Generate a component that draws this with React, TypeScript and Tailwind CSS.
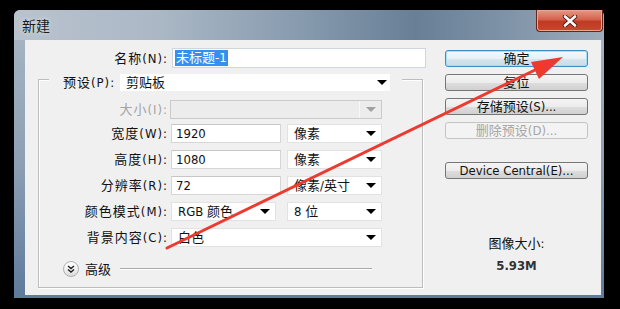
import React from "react";

const Tri = ({ disabled }: { disabled?: boolean }) => (
  <svg width="10" height="5" viewBox="0 0 10 5" className="shrink-0">
    <path d="M0 0H10L5 5Z" fill={disabled ? "#a0a0a0" : "#000"} />
  </svg>
);

const Sel = ({ text, className }: { text: string; className: string }) => (
  <div
    className={
      "flex h-[19px] items-center justify-between border border-[#e2e2e2] bg-white pl-[6px] pr-[5px] " +
      className
    }
  >
    <span>{text}</span>
    <Tri />
  </div>
);

const Inp = ({ text }: { text: string }) => (
  <div className="flex h-[19px] w-[110px] items-center border border-[#d6d6d6] border-t-[#c6c6c6] bg-white pl-[4px]">
    {text}
  </div>
);

const Row = ({
  label,
  children,
  className,
  disabled,
}: {
  label: string;
  children: React.ReactNode;
  className: string;
  disabled?: boolean;
}) => (
  <div className={"flex h-[19px] items-center " + className}>
    <div className={"w-[129px] text-right tracking-[1px] " + (disabled ? "text-[#a3a3a3]" : "text-[#111]")}>{label}</div>
    <div className="ml-[3px] flex items-center">{children}</div>
  </div>
);

const Btn = ({
  text,
  className,
  primary,
  disabled,
}: {
  text: string;
  className: string;
  primary?: boolean;
  disabled?: boolean;
}) => (
  <div
    className={
      "flex h-[17px] items-center justify-center rounded-[3px] border " +
      (primary
        ? "border-[#3c8fc4] bg-[linear-gradient(180deg,#f4f9fc_0%,#e8f1f7_50%,#d7e6ef_51%,#c9dbe6_100%)] shadow-[inset_0_0_0_1px_#a6e0f5] text-[#111] "
        : disabled
        ? "border-[#c4c4c4] bg-[#f3f3f3] text-[#a6a6a6] "
        : "border-[#767676] bg-[linear-gradient(180deg,#f4f4f4_0%,#ececec_50%,#dedede_51%,#d0d0d0_100%)] text-[#111] ") +
      className
    }
  >
    {text}
  </div>
);

export default function App() {
  return (
    <div className="relative h-[309px] w-[620px] overflow-hidden bg-black pl-[14px] pt-[10px] font-['DejaVu_Sans_Condensed','DejaVu_Sans','Noto_Sans_CJK_SC',sans-serif] text-[13px] leading-[19px] text-[#111]">
      <div className="flex h-[288px] w-[590px] flex-col rounded-t-[6px] bg-[linear-gradient(180deg,#aab7c6_0%,#8fa1b5_50%,#5f7b9b_100%)]">
        {/* title bar */}
        <div className="flex h-[30px] items-start justify-between rounded-t-[6px] bg-[linear-gradient(90deg,#b9c3ce_0%,#aab7c5_25%,#8599ad_50%,#687f96_68%,#7c91a6_82%,#9eacbb_100%)]">
          <div className="pl-[8px] pt-[6px] font-['Noto_Sans_CJK_SC',sans-serif] text-[14px] leading-[18px] text-[#1a1a1a] [text-shadow:0_0_4px_#e8eef4]">
            新建
          </div>
          <div className="mr-[1px] flex h-[22px] w-[67px] items-center justify-center rounded-b-[4px] border border-t-0 border-[#6a2418] bg-[linear-gradient(180deg,#e49a88_0%,#d4624c_45%,#c13a22_55%,#c4492e_100%)] shadow-[inset_0_0_0_1px_#eaa595]">
            <svg width="16" height="12" viewBox="0 0 16 12">
              <path d="M3 1.5L13 10.5M13 1.5L3 10.5" stroke="#5a1a10" strokeWidth="4.4" strokeLinecap="round" />
              <path d="M3 1.5L13 10.5M13 1.5L3 10.5" stroke="#ffffff" strokeWidth="2.6" strokeLinecap="round" />
            </svg>
          </div>
        </div>

        {/* content */}
        <div className="mb-[3px] ml-[11px] mr-[3px] flex flex-1 bg-[#f0f0f0]">
          {/* left column */}
          <div className="flex w-[401px] flex-col">
            <div className="mt-[8px] flex h-[20px] items-center">
              <div className="w-[143px] text-right tracking-[1px]">名称(N):</div>
              <div className="ml-[4px] flex h-[20px] w-[254px] items-center border border-[#cfd6de] bg-white pl-[2px]">
                <span className="bg-[#3390f0] px-[1px] leading-[16px] text-white">未标题-1</span>
              </div>
            </div>

            <div className="ml-[13px] mt-[11px] h-[209px] w-[385px] border border-[#bdbdbd] shadow-[inset_1px_1px_0_#ffffff,1px_1px_0_#ffffff]">
              <div className="-mt-[7px] ml-[10px] flex w-fit items-center bg-[#f0f0f0] pl-[14px] pr-[12px]">
                <div className="w-[54px] tracking-[1px]">预设(P):</div>
                <div className="ml-[3px] flex h-[17px] w-[270px] items-center justify-between bg-white pl-[6px] pr-[3px]">
                  <span>剪贴板</span>
                  <Tri />
                </div>
              </div>

              <Row label="大小(I):" className="mt-[8px]" disabled>
                <div className="-ml-[1px] flex h-[19px] w-[212px] items-center justify-end border border-[#cacaca] bg-[#ececec]">
                  <div className="flex h-full w-[22px] items-center justify-center border-l border-[#f8f8f8]">
                    <Tri disabled />
                  </div>
                </div>
              </Row>
              <Row label="宽度(W):" className="mt-[5px]">
                <Inp text="1920" />
                <Sel text="像素" className="ml-[6px] w-[95px]" />
              </Row>
              <Row label="高度(H):" className="mt-[7px]">
                <Inp text="1080" />
                <Sel text="像素" className="ml-[6px] w-[95px]" />
              </Row>
              <Row label="分辨率(R):" className="mt-[7px]">
                <Inp text="72" />
                <Sel text="像素/英寸" className="ml-[6px] w-[95px]" />
              </Row>
              <Row label="颜色模式(M):" className="mt-[7px]">
                <Sel text="RGB 颜色" className="w-[105px]" />
                <Sel text="8 位" className="ml-[11px] w-[95px]" />
              </Row>
              <Row label="背景内容(C):" className="mt-[7px]">
                <Sel text="白色" className="w-[211px]" />
              </Row>

              <div className="mt-[14px] flex h-[16px] items-center">
                <div className="ml-[24px] flex h-[16px] w-[16px] items-center justify-center rounded-full border border-[#b0b0b0] bg-[linear-gradient(180deg,#ffffff_0%,#f2f2f2_50%,#d9d9d9_100%)]">
                  <svg width="8" height="8" viewBox="0 0 8 8">
                    <path d="M1 1L4 3.5L7 1M1 4.5L4 7L7 4.5" stroke="#222" strokeWidth="1.4" fill="none" />
                  </svg>
                </div>
                <div className="ml-[6px]">高级</div>
                <div className="ml-[9px] h-[2px] w-[252px] border-t border-b border-t-[#a9a9a9] border-b-white" />
              </div>
            </div>
          </div>

          {/* right column */}
          <div className="ml-[19px] flex w-[143px] flex-col">
            <Btn text="确定" className="mt-[10px]" primary />
            <Btn text="复位" className="mt-[7px]" />
            <Btn text="存储预设(S)..." className="mt-[7px]" />
            <Btn text="删除预设(D)..." className="mt-[7px]" disabled />
            <Btn text="Device Central(E)..." className="mt-[23px]" />
            <div className="mt-[57px] text-center leading-[16px]">图像大小:</div>
            <div className="mt-[6px] text-center font-bold leading-[16px] text-[#333]">5.93M</div>
          </div>
        </div>
      </div>

      {/* red annotation arrow */}
      <svg className="pointer-events-none absolute inset-0" width="620" height="309" viewBox="0 0 620 309">
        <path d="M167 248L535 70" stroke="#ec3a30" strokeWidth="3" strokeLinecap="round" />
        <path d="M563 57L539 79L531 62Z" fill="#ec3a30" />
      </svg>
    </div>
  );
}
